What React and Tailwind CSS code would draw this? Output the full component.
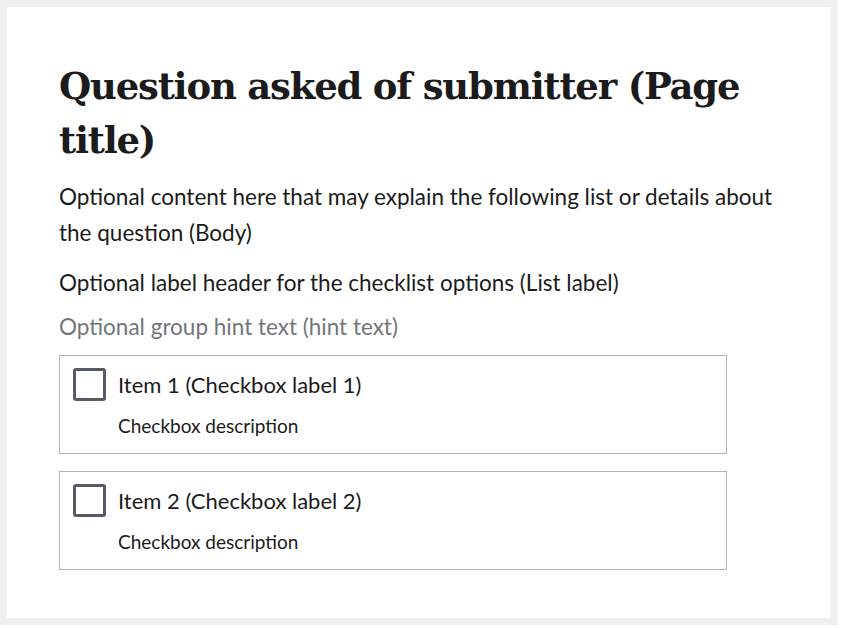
const items = [
  { id: 'item-1', label: 'Item 1 (Checkbox label 1)' },
  { id: 'item-2', label: 'Item 2 (Checkbox label 2)' },
];

function CheckboxTile({ label }) {
  return (
    <label className="flex w-[668px] gap-[12px] border border-[#b1b4b6] px-[13px] pt-[12px] pb-[12px]">
      <span className="h-[33px] w-[33px] shrink-0 rounded-[3px] border-[3px] border-[#565c65] bg-white" />
      <span className="flex flex-col">
        <span className="text-[22px] leading-[34px] text-[#1b1b1b]">{label}</span>
        <span className="mt-[9px] text-[19px] leading-[30px] text-[#1b1b1b]">
          Checkbox description
        </span>
      </span>
    </label>
  );
}

export default function App() {
  return (
    <div className="h-[625px] w-[838px] border-[7px] border-[#efefef] bg-white px-[52px] pt-[52px] font-['Lato',sans-serif] text-[#1b1b1b]">
      <h1 className="font-['DejaVu_Serif',serif] text-[37px] font-bold leading-[54px] tracking-[-1.2px]">
        Question asked of submitter (Page title)
      </h1>
      <p className="mt-[12px] text-[22.5px] leading-[36px]">
        Optional content here that may explain the following list or details
        about the question (Body)
      </p>
      <fieldset className="mt-[14px]">
        <legend className="text-[22.5px] leading-[36px]">
          Optional label header for the checklist options (List label)
        </legend>
        <p className="mt-[8px] text-[22.5px] leading-[36px] text-[#71767a]">
          Optional group hint text (hint text)
        </p>
        <div className="mt-[10px] flex flex-col gap-[17px]">
          {items.map((item) => (
            <CheckboxTile key={item.id} label={item.label} />
          ))}
        </div>
      </fieldset>
    </div>
  );
}
